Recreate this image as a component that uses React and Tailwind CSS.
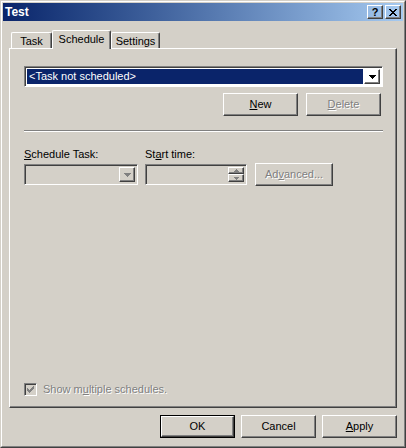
const raised =
  "border border-t-white border-l-white border-r-[#404040] border-b-[#404040] shadow-[inset_-1px_-1px_#808080]";
const sunken =
  "border border-t-[#808080] border-l-[#808080] border-r-white border-b-white shadow-[inset_1px_1px_#404040]";
const disabledText = "text-[#808080] [text-shadow:1px_1px_0_#ffffff]";

function Arrow({ color = "#000" }) {
  return (
    <svg width="7" height="4" viewBox="0 0 7 4">
      <path d="M0 0h7L3.5 4z" fill={color} shapeRendering="crispEdges" />
    </svg>
  );
}

function Button({ children, className = "", disabled, isDefault }) {
  const inner = (
    <div
      className={`${raised} h-full w-full flex items-center justify-center ${
        disabled ? disabledText : "text-black"
      }`}
    >
      {children}
    </div>
  );
  if (isDefault) {
    return <div className={`border border-black ${className}`}>{inner}</div>;
  }
  return <div className={className}>{inner}</div>;
}

function Tab({ label, active, width }) {
  if (active) {
    return (
      <div
        className={`${width} h-[19px] -mb-px relative z-10 bg-[#d4d0c8] border-t border-l border-r border-t-white border-l-white border-r-[#404040] shadow-[inset_-1px_0_#808080] rounded-t-[2px] flex justify-center pt-[2px]`}
      >
        {label}
      </div>
    );
  }
  return (
    <div
      className={`${width} h-[16px] border-t border-l border-r border-t-white border-l-white border-r-[#404040] shadow-[inset_-1px_0_#808080] rounded-t-[2px] flex justify-center pt-[2px]`}
    >
      {label}
    </div>
  );
}

export default function App() {
  return (
    <div className="w-[406px] h-[448px] bg-[#d4d0c8] border border-t-[#d4d0c8] border-l-[#d4d0c8] border-r-[#404040] border-b-[#404040] font-['Liberation_Sans',sans-serif] text-[11px] leading-[13px] text-black select-none">
      <div className="h-full border border-t-white border-l-white border-r-[#808080] border-b-[#808080] p-px flex flex-col">
        {/* title bar */}
        <div className="h-[18px] bg-gradient-to-r from-[#0a246a] to-[#a6caf0] flex items-center pl-[2px] pr-[2px]">
          <span className="text-white font-bold text-[12px] flex-1">Test</span>
          <div className="flex gap-[2px]">
            <div className={`${raised} w-[16px] h-[14px] flex items-center justify-center font-bold text-[11px] leading-none`}>
              ?
            </div>
            <div className={`${raised} w-[16px] h-[14px] flex items-center justify-center`}>
              <svg width="8" height="7" viewBox="0 0 8 7">
                <path
                  d="M0 0h2v1h1v1h2V1h1V0h2v1H7v1H6v1H5v1h1v1h1v1h1v1H6V6H5V5H3v1H2v1H0V6h1V5h1V4h1V3H2V2H1V1H0z"
                  fill="#000"
                  shapeRendering="crispEdges"
                />
              </svg>
            </div>
          </div>
        </div>

        {/* tabs */}
        <div className="mx-[6px] pt-[9px] flex items-end pl-[2px] h-[27px]">
          <Tab label="Task" width="w-[41px]" />
          <Tab label="Schedule" width="w-[59px]" active />
          <Tab label="Settings" width="w-[49px]" />
        </div>

        {/* panel */}
        <div className="mx-[6px] h-[360px] border border-t-white border-l-white border-r-[#404040] border-b-[#404040] shadow-[inset_-1px_-1px_#808080] pl-[14px] pr-[13px] pt-[17px] flex flex-col">
          {/* schedule combo */}
          <div className={`${sunken} h-[21px] bg-white flex p-[2px] pl-[2px]`}>
            <div className="flex-1 bg-[#0a246a] text-white flex items-center pl-[2px] mr-[1px]">
              &lt;Task not scheduled&gt;
            </div>
            <div className={`${raised} w-[16px] flex items-center justify-center`}>
              <Arrow />
            </div>
          </div>

          <div className="flex justify-end gap-[8px] mt-[6px] pr-[2px]">
            <Button className="w-[75px] h-[23px]">
              <span>
                <u>N</u>ew
              </span>
            </Button>
            <Button className="w-[75px] h-[23px]" disabled>
              <span>
                <u>D</u>elete
              </span>
            </Button>
          </div>

          {/* separator */}
          <div className="mt-[14px] h-[2px] border-t border-t-[#808080] border-b border-b-white" />

          <div className="flex mt-[16px]">
            <div className="w-[121px] flex flex-col">
              <span>
                <u>S</u>chedule Task:
              </span>
              <div className={`${sunken} mt-[3px] w-[114px] h-[21px] flex justify-end p-[2px]`}>
                <div className={`${raised} w-[16px] flex items-center justify-center`}>
                  <Arrow color="#808080" />
                </div>
              </div>
            </div>
            <div className="w-[110px] flex flex-col">
              <span>
                St<u>a</u>rt time:
              </span>
              <div className={`${sunken} mt-[3px] w-[102px] h-[21px] flex justify-end p-[2px]`}>
                <div className="w-[16px] flex flex-col">
                  <div className={`${raised} h-[8px] flex items-center justify-center`}>
                    <svg width="5" height="3" viewBox="0 0 5 3">
                      <path d="M2.5 0L5 3H0z" fill="#808080" shapeRendering="crispEdges" />
                    </svg>
                  </div>
                  <div className={`${raised} h-[9px] flex items-center justify-center`}>
                    <svg width="5" height="3" viewBox="0 0 5 3">
                      <path d="M0 0h5L2.5 3z" fill="#808080" shapeRendering="crispEdges" />
                    </svg>
                  </div>
                </div>
              </div>
            </div>
            <Button className="w-[78px] h-[23px] mt-[15px]" disabled>
              <span>
                Ad<u>v</u>anced...
              </span>
            </Button>
          </div>

          <div className="flex-1" />

          {/* checkbox */}
          <div className="flex items-center mb-[11px]">
            <div className={`${sunken} w-[13px] h-[13px] flex items-center justify-center`}>
              <svg width="7" height="7" viewBox="0 0 7 7">
                <path
                  d="M6 0h1v3H6v1H5v1H4v1H3v1H2V6H1V5H0V2h1v1h1v1h1V3h1V2h1V1h1z"
                  fill="#808080"
                  shapeRendering="crispEdges"
                />
              </svg>
            </div>
            <span className={`ml-[6px] ${disabledText}`}>
              Show m<u>u</u>ltiple schedules.
            </span>
          </div>
        </div>

        {/* bottom buttons */}
        <div className="flex justify-end gap-[6px] mt-[7px] mr-[6px]">
          <Button className="w-[75px] h-[23px]" isDefault>
            OK
          </Button>
          <Button className="w-[75px] h-[23px]">Cancel</Button>
          <Button className="w-[75px] h-[23px]">
            <span>
              <u>A</u>pply
            </span>
          </Button>
        </div>
      </div>
    </div>
  );
}
